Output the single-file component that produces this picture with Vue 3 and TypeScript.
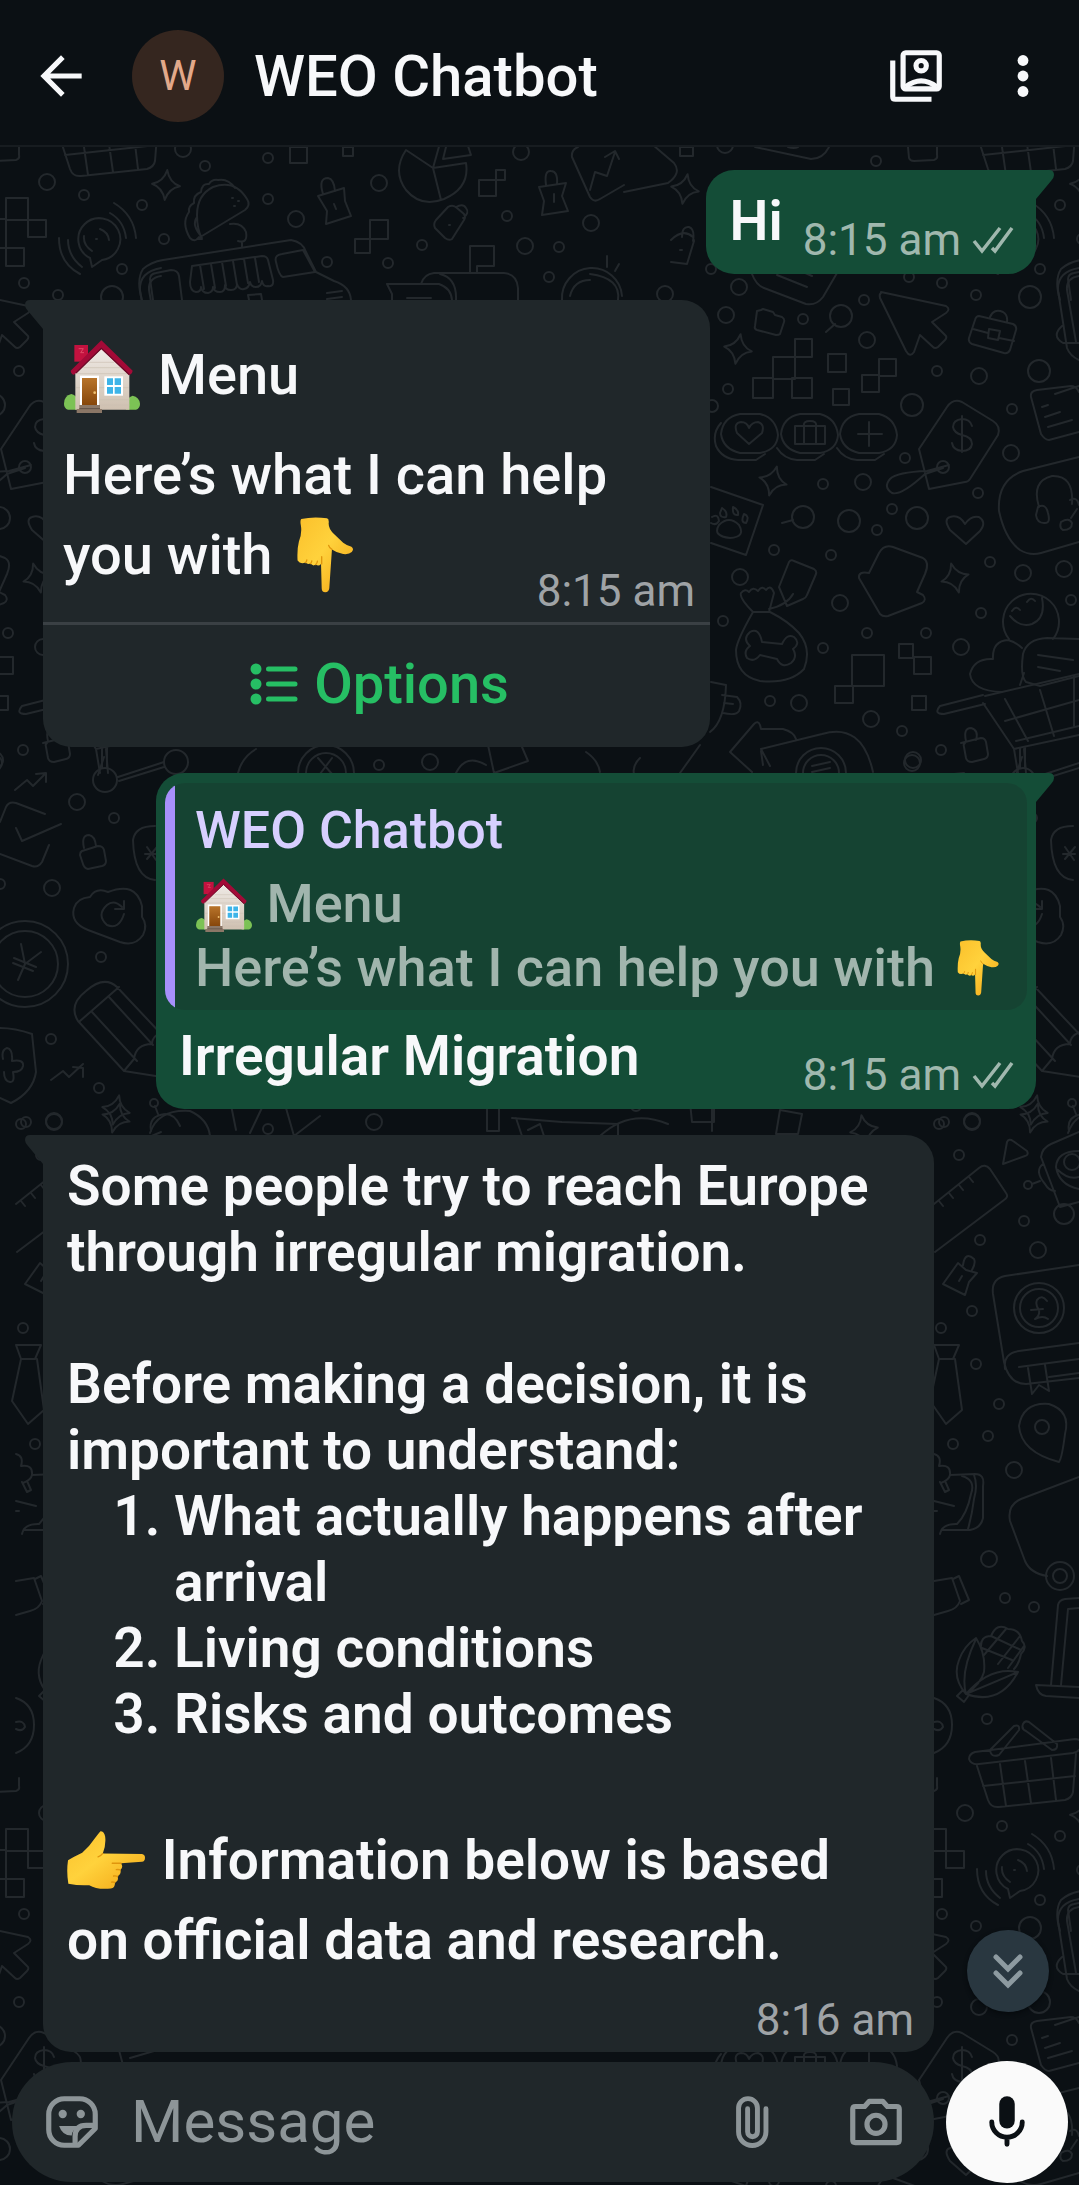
<script setup lang="ts">
import { ref } from 'vue'

type Ring = [x: number, y: number, r: number]
type Box = [x: number, y: number, w: number, h: number]

const draft = ref('')

const steps = ['What actually happens after arrival', 'Living conditions', 'Risks and outcomes']

// Wallpaper: one tile of line drawings, repeated every 918 x 1631.
const tileOffsets = [
  [0, 0],
  [-918, 0],
  [918, 0],
  [0, 1631],
  [918, 1631],
  [-918, -1631],
  [0, -1631],
  [-918, 1631],
]

const rings: Ring[] = [
  [47, 182, 8], [84, 195, 5], [205, 166, 5], [183, 149, 8], [142, 205, 5], [164, 239, 5],
  [122, 269, 5], [24, 283, 5], [58, 295, 5], [112, 297, 11], [268, 158, 5], [268, 199, 5],
  [296, 219, 8], [327, 262, 5], [379, 183, 8], [388, 263, 5], [422, 245, 5], [507, 216, 5],
  [521, 152, 8], [525, 246, 8], [549, 277, 5], [559, 247, 5], [591, 223, 8], [665, 294, 8],
  [876, 161, 5], [725, 145, 8], [711, 269, 5], [739, 287, 8], [909, 277, 5], [726, 315, 8],
  [803, 319, 5], [841, 316, 11], [864, 300, 5], [867, 340, 8], [728, 389, 5], [712, 406, 6],
  [937, 371, 5], [979, 376, 8], [1039, 371, 11], [912, 405, 11], [1012, 409, 5], [1011, 453, 8],
  [905, 458, 5], [978, 493, 5], [823, 484, 5], [863, 482, 8], [892, 509, 5], [803, 517, 11],
  [849, 521, 11], [877, 530, 5], [917, 518, 11], [774, 550, 5], [831, 555, 5], [740, 577, 8],
  [990, 562, 5], [1023, 573, 8], [1064, 569, 8], [840, 603, 8], [723, 621, 5], [981, 613, 5],
  [1071, 600, 5], [867, 633, 5], [926, 633, 5], [823, 648, 5], [961, 647, 8], [770, 701, 5],
  [799, 703, 8], [871, 719, 8], [902, 731, 5], [941, 750, 5], [913, 760, 8],
  [77, 802, 8], [114, 818, 5], [52, 888, 8], [0, 884, 5], [101, 957, 5], [51, 1039, 5],
  [99, 1088, 5], [21, 1124, 5], [54, 1121, 8], [959, 1155, 5], [980, 1240, 5], [1038, 1250, 8],
  [1024, 1221, 5], [972, 1311, 5], [941, 1328, 5], [976, 1364, 5], [999, 1404, 5], [988, 1436, 5],
  [953, 1444, 5], [1014, 1470, 8], [989, 1559, 8], [1005, 1598, 5], [1034, 1607, 5], [987, 1719, 5],
  [379, 765, 5], [430, 762, 8], [912, 763, 8], [374, 1122, 8], [268, 1129, 5], [636, 1106, 5],
  [944, 1122, 5], [972, 1122, 8],
]

const boxes: Box[] = [
  [290, 147, 17, 16], [343, 147, 10, 9], [479, 180, 17, 16], [496, 170, 9, 10], [370, 220, 18, 19],
  [355, 239, 15, 14], [6, 198, 22, 22], [28, 220, 18, 17], [-18, 219, 24, 29], [6, 248, 18, 18],
  [680, 147, 13, 9], [795, 339, 17, 18], [773, 357, 22, 22], [753, 378, 20, 20], [792, 378, 20, 20],
  [828, 354, 18, 18], [833, 389, 16, 16], [879, 359, 17, 17], [862, 375, 17, 17], [852, 655, 32, 31],
  [835, 686, 18, 17], [899, 644, 14, 14], [914, 657, 17, 17], [912, 696, 14, 14],
]

const sparkles: [number, number, number][] = [
  [166, 185, 5], [685, 189, 10], [738, 349, 10], [773, 481, 15], [955, 578, -15], [116, 1118, 15],
  [864, 1130, -10], [1034, 1110, 12],
]

const outlines: string[] = [
  // basket
  'M975 1752l100-13q8 0 6 8q-2 5-8 6l-94 11q-8 1-10-5q0-5 6-7zM977 1766l11 34q3 8 11 7l66-7q7-2 8-8l3-38M983 1786l92-10M1000 1764l6 42M1025 1761l6 42M1051 1758l5 42M990 1750l24-24q6-2 5 4l-20 25q-8 3-9-5M1023 1724q-2 5 3 7l26 19q6 0 5-6l-28-22q-4-2-6 2',
  // chat signal
  'M90 258a21 21 0 1 1 12 2l-10 7zM96 239h1M84 236q-1 9 8 15M100 229q8 3 9 11M68 240q0 16 14 27M59 238q0 25 21 36M110 213q14 8 16 25M114 203q20 12 22 35',
  // taco
  'M197 239l48-29q6-5 2-11q-12-20-34-12q-16 8-16 28q0 14 5 24zM199 237q-4 6-9 1q-9-15-1-26q-1-6 5-9q-1-8 7-11q1-9 8-8q3-5 9-4q10-2 17 8M232 198h1M238 201h1M234 206h1M197 217q-6 8 5 20M230 224q12-2 16 8q2 12-8 9M242 242v5',
  // push pins
  'M318 196l26-8l1 13l6 15l-25 8l1-13zM323 194q-5-16 5-16q6 1 7 13M334 204l2 5',
  'M539 187l27-4l-4 13l6 15l-26 4l2-14zM546 185q-2-15 5-14q7 0 6 13M554 194v8',
  // pie chart
  'M406 150q-14 21 0 40q15 18 38 9q26-11 22-36l-33 5l-27-18M433 168l8 32M433 168l7-25M447 143l-4 16l28-4l-3-9',
  // key tag
  'M436 220l12-13q5-3 9 1l7 6q2 3 0 6l-12 19q-3 2-7-1l-10-10q-2-4 1-8zM456 207q7-4 10 1q4 5-3 10M449 225h1',
  // growth chart card
  'M572 157l18 40q4 6 10 2l24-14M572 157q-1-7 6-10M590 190l5-18l12 4l8-24M605 157l10-6l4 8M646 139l28 24q8 10-6 20l-44 9',
  // food truck
  'M142 300q-6-20 1-31q8-7 20-9l128-20q12 2 15 12l10 20l18 9q16 5 17 19M153 300l-3-21q0-5 6-6l15-3q7 0 8 6l3 24M192 266l70-10q5 0 6 4l5 20q1 7-5 6q-5 1-6-5q-1 6-6 6q-5 0-6-5q-1 6-6 7t-7-5q0 6-6 6t-6-5q0 7-5 7q-6 0-7-5q0 5-5 6q-6 0-7-6q0 5-5 5q-6-1-6-10zM200 265l4 24M211 264l4 24M222 262l4 24M233 261l4 24M244 259l4 24M255 258l4 24M276 262q-2-7 6-8l21-4M303 250l12 22l-32 5q-4-1-7-15M249 300l-1-5l13-1l1 6M327 293l15-2M327 299l15-2',
  // mail box
  'M470 273v-27h24v20h-17v7M421 284q3-10 13-11h70q13 1 14 15v12M440 274q17 4 16 26M387 284h52q12 4 13 16M387 284l5 10v6M407 298h24',
  // bulb
  'M562 300a30 30 0 0 1 60-4M570 296q4-16 20-16M607 256v11M619 264l-4 7M590 274q31 4 28 26',
  // papers and lock
  'M755 147l56 12q12 0 18-12M788 147q6 2 10 0M908 147l1 11q1 3 5 3l20-1q4-1 3-5v-8',
  'M671 240q12-12 22-3l1 4l-7 23l-16-2M682 237q0-11 7-10q6 2 4 14M680 250h2M752 274q4 11 12 14l42 16q10 2 17-7l14-24M777 275l30 12M803 272l9 4',
  // folder
  'M757 311l4-1l2-1l10 3l2 3l7 2q3 2 2 5l-4 12q-1 1-4 1l-19-5q-3-1-2-4z',
  'M835 324l-9 8M793 520l-11 3',
  // cursor
  'M881 292l65 14q5 3 0 7l-14 9l14 14q1 2-1 4l-7 7q-3 2-5 0l-13-12l-6 17q-4 6-8-1l-26-53q-1-4 1-5z',
  // brief case
  'M979 316l34 8q4 2 3 6l-6 20q-2 4-6 3l-32-9q-4-2-3-6l6-18q1-4 4-4zM990 317q4-9 13-5q5 3 4 10M973 329l15 4M999 338l15 3M989 329l11 2l-2 9l-10-2z',
  // phone edge
  'M1079 268q-22 4-21 22l9 58q3 8 12 12M1079 276q-13 2-12 14l9 52M1062 326q-11 10 1 17h16',
  // coins
  'M740 414h20q16 4 18 21q-1 15-18 18h-20q-17-4-19-19q2-17 19-20M721 423q-9 10-5 23q6 13 22 14h18l9-6M800 414h20q16 4 18 21q-1 15-18 18h-20q-17-4-19-19q2-17 19-20M777 448q7 11 20 12h18l9-6M859 414h20q16 4 18 21q-1 15-18 18h-20q-17-4-19-19q2-17 19-20M837 448q7 11 20 12h18l9-6M749 444l-12-11q-4-10 4-11q6 0 8 6q3-6 9-6q7 2 4 11zM795 426h30v18h-30zM804 426v18M816 426v18M804 426q-1-5 6-5t6 5M869 422v24M858 434h24',
  // price tag
  'M919 449l28-42q6-9 15-5l31 19q8 5 5 14l-28 44q-2 3-5 3l-36 7zM962 416v36M972 426q-2-7-10-7q-9 1-9 8q1 6 9 8q10 2 10 9q-1 7-10 7q-9-1-10-8M949 465l-22 6q-30 1-37 8q-7 8 2 14q9 3 33-19l18-6M937 467a6 6 0 1 0 12 0a6 6 0 1 0-12 0',
  // document edge
  'M1079 386l-24 8M1042 407l6-2M1045 417l15-5M1048 427l24-7M1031 397q-1-6 6-7l34-4q5 0 8 6M1031 397l10 37q4 6 8 6l30-8',
  // head set card
  'M1079 457l-56 14q-26 9-24 40q6 28 21 39q10 6 21 3l38-11M1039 507q-8-26 13-31q22-1 20 28M1038 507q8-4 10 6q3 11-4 10q-7 0-8-8zM1070 500q7-4 9 5M1061 522q8-5 11 1q0 7-9 7q-4-2-2-8M1071 518l6-9',
  // paw photo
  'M711 487l52 18l-17 50l-35-12M719 525q10-10 20 0q7 12-9 13q-18-2-11-13M722 508q6 4 4 9q-6 1-6-4zM733 507q6 3 5 8q-6 1-5-8M744 514q6 2 2 9q-6 0-2-9M712 517q6-4 7 4q-3 5-8 2',
  // glove
  'M869 573l10-20q5-9 14-6l30 11q7 4 2 16l-8 18l6 3q4 5-1 8l-34 13q-5 1-8-2l-21-36q-1-7 10-5z',
  // heart
  'M966 544l-16-14q-7-11 0-13q9-3 15 7q6-9 14-7q8 5 1 14z',
  // treat bag, tag and bone
  'M753 612q-14-14-12-19q4-5 8-1q4-6 9-1q4-6 8-1q5-6 8 3l-5 19zM753 612q-16 28-17 38q0 26 24 31q30 3 44-12q8-20-5-36q-11-12-29-21M779 587l10-25q2-3 5-1l20 8q3 2 2 5l-9 21q-1 3-4 4l-16 7zM769 609q18-4 24-15M762 642l20 2q5-11 12-7q7 6-1 12q5 8-2 14q-9 6-14-4l-17-4q-6 8-13 3q-4-7 3-12q-8-7 0-14q9-5 12 10z',
  // happy face, heart and speech
  'M1009 639a28 28 0 1 1 44 0M1010 616q10 12 22 8q14-6 10-26M1012 611q4-6 8-1M1027 602q4-6 8-1M1002 692q-30-1-32-18q4-16 23-15q-1-18 15-19q8 2 14 8M1079 639l-32-1q-20 1-24 16q-3 22 3 28l14 4l39-10M1020 685l4-12M1038 655l35 5M1038 667l22 4',
  // cart
  'M983 695l-43 11q-7 8 4 8l41-10M983 703l31 46l65-14M1005 699l23 42M1040 690l14 46M1074 676v50M1005 721l74-21M985 696l94-22M1014 749l4 24M1024 749l2 24M1016 741l63-15',
  // padlock
  'M961 743l20-5q4 0 5 4l2 12q0 4-4 5l-12 3q-5 0-6-4l-2-11q-1-3 1-4M966 741q-3-13 5-13q8 2 5 12',
  // arrow and money letter
  'M752 772l-22-20l24-28q4-4 6 1l1 4h22q11 3 13 10M761 751l2 14M761 749l61-15q40-12 51 38M761 749l9 17M796 773a25 25 0 0 1 50 0M803 773a18 18 0 0 1 36 0M812 766l18-4M812 772l18-4',
  // cup
  'M711 682l15 3q-1 36-16 47M722 695l15 2q6 6 2 14q-3 5-16 2M724 703l9 1',
  // trend arrows
  'M15 790l12-10l6 6l12-12M36 774l10-1v9M51 1080l12-9l6 6l14-13M73 1067l10 1v9',
  // ticked card
  'M45 814l-29-11q-7-2-10 4l-6 15M16 828l6 13l39-17M49 845l-7 17q-4 6-10 4l-32-12',
  // small lock, code tile
  'M82 851l16-5q5 0 6 4l2 11q0 4-4 5l-14 3q-4-1-5-5l-3-9q0-3 2-4M84 848q-3-13 5-13q6 1 7 11M155 826q-20 0-22 14q1 38 22 40M147 847l9 13M157 847l-10 12M145 854h12',
  // cloud
  'M88 930q-18-7-14-22q3-10 16-11q6-10 18-5q28-11 34 14v11q6 8 1 18q-8 12-23 7zM124 914q-5 16-17 11q-11-10 0-20q7-6 15 2M115 909h9v-8',
  // yen coin
  'M-18 964a43 43 0 1 0 86 0a43 43 0 1 0-86 0M-8 964a33 33 0 1 0 66 0a33 33 0 1 0-66 0M21 944l4 20l16-12M25 964l-7 16M14 958l22 9M13 963l20 8',
  // pencil
  'M78 1021q-10-16 8-30q18-16 31-4l47 50M78 1021l46 50l38 6M92 1012l45 49M109 997l44 48M80 1021l39-34M124 1071l10-12q2-15 18-15q0-8 10-12',
  // shield
  'M0 1028q15 0 32 6l4 38q-3 20-25 31l-11-5M3 1059q-2-9 4-11q6 1 5 13q12-2 11 5q-1 6-10 6q2 11-3 10q-6-1-6-10',
  // robot
  'M151 1131q-3-15 14-17q10 0 15 12M158 1114l-3-8M150 1103a4 4 0 1 0 8 0a4 4 0 1 0-8 0',
  // molecule
  'M93 780a12 12 0 1 0 24 0a12 12 0 1 0-24 0M102 768v-20M107 768v-20M118 777l46-15M119 781l45-14M164 762a12 12 0 1 0 24 0a12 12 0 1 0-24 0',
  // play triangle, ruler, pin
  'M1003 1164l4-22q2-4 6-1l14 10q2 4-2 5zM934 1204l45-36q6-5 11 1l16 24q3 4-2 7l-69 52M939 1201l4 5M949 1193l4 5M959 1185l4 5M969 1177l4 5M943 1284l15-21l8 7l11 3l-8 9l-4 13zM963 1265q2-14 11-6q2 4-2 11M959 1281l3-5',
  // rover
  'M1079 1132l-28 12q-9 4-10 13l19 50l19-5M1043 1164q-9 7 2 20q4 7 10 7M1032 1184l8-3M1024 1185a4 4 0 1 0 8 0a4 4 0 1 0-8 0M1054 1214a10 10 0 1 0 20 0a10 10 0 1 0-20 0M1079 1151q-22 0-23 16q3 18 23 22M1064 1162a8 8 0 1 0 16 0a8 8 0 1 0-16 0M1058 1170q10 10 21 7',
  // account book
  'M1079 1265l-74 11q-14 3-12 18l11 68q5 22 22 22l53-6M1079 1343l-60 8q-16 2-14 18M1079 1359l-60 8M1079 1373l-30 4M1028 1368l4 26l7-9l10 6l-4-26M1014 1308a25 25 0 1 0 50 0a25 25 0 1 0-50 0M1020 1308a19 19 0 1 0 38 0a19 19 0 1 0-38 0M1047 1301q-5-7-10-1q-2 5 2 10q1 6-4 9q8-4 13 0M1031 1310l12-1',
  // tie
  'M934 1345h25l-6 14h-14zM939 1359l-9 42l16 23l16-14l-7-51',
  // map pin
  'M1059 1462q-38-10-40-36q4-24 30-22q22 7 16 30q-3 24-6 28M1035 1427a7 7 0 1 0 14 0a7 7 0 1 0-14 0',
  // rucksack
  'M934 1454q8 2 5 12q12-2 11 9q-1 5-9 8M950 1475l25-1q10 0 8 12v32q-2 10-13 12h-28M962 1476q14 4 9 18q-4 20-14 30M940 1482l5 10l4-2l-4-9M934 1501l20 5M934 1511h3M974 1475q4 10 0 24q-2 16-6 30M940 1534q2-10 16-10',
  // van
  'M1079 1477l-58 22q-14 6-11 22l15 40q5 12 22 15M1046 1576a14 14 0 1 0 28 0a14 14 0 1 0-28 0M1053 1576a7 7 0 1 0 14 0a7 7 0 1 0-14 0',
  // bottle
  'M934 1581l18-3l8 23q-3 8-12 10l-14 4M953 1579l6-3l10 24l-8 4',
  // corn
  'M966 1694q-14-16-7-34q5-14 17-22q10 16 8 34q-3 12-18 22zM966 1694q-6-22 10-55M966 1694q34 12 52-22q-28-6-52 22M966 1694q34-14 52-22M957 1696l6-6l6 5l-5 7zM981 1648q-1-12 10-12q6-14 17-7q12 0 14 12q6 6-1 13q-2 10-7 15M982 1648l30 12M991 1636l30 14M1006 1629l-22 26M1020 1636l-22 28M1024 1646l-16 22',
  // laptop
  'M1079 1598l-14 1q-6 1-7 6l-7 80M1079 1608l-11 1l-7 76M1079 1687l-43-2q2 10 10 11l33 2',
  // bean
  'M934 1698q18 6 18 27t-18 28M934 1722q8-2 9 5q-3 5-9 2',
  // small objects between the cards
  'M250 1133l18-38M230 1100l6 30M487 1109v22h12v-22M512 1118l50 4l56 2v12M516 1118l6 18M528 1130l12-6l4 12M690 1102l2 20h22v-22M712 1109v22M600 1136q30-28 68-12M780 1110l22 4l-4 20h-22zM150 1133q8-24 40-22q18 8 20 25M286 1108l8 28l26-20',
  'M298 773a28 28 0 0 1 56 0M306 773a20 20 0 0 1 40 0M318 758l14 16M332 758l-12 16M456 773q10-20 30-8M488 745l6 28l34-12l-6-14M586 752q12 8 14 20M1022 757l-6 18M700 745l-20 28M640 758q-8 8-6 16M238 773q4-16 18-24',
]
</script>

<template>
  <div class="app">
    <header class="bar">
      <button class="icon-button" type="button" aria-label="Back">
        <svg class="icon" viewBox="0 0 24 24" fill="currentColor">
          <path d="M20 11H7.83l5.59-5.59L12 4l-8 8 8 8 1.41-1.41L7.83 13H20z" />
        </svg>
      </button>
      <div class="avatar" aria-hidden="true">W</div>
      <h1 class="title">WEO Chatbot</h1>
      <button class="icon-button" type="button" aria-label="Media">
        <svg class="icon" viewBox="0 0 24 24" fill="none" stroke="currentColor" stroke-width="2">
          <path d="M3 6v14q0 1 1 1h14" />
          <rect x="7" y="3" width="14" height="14" rx="1" />
          <circle cx="14" cy="8" r="2" />
          <path d="M8 16.2q6-4.600 12 0" />
        </svg>
      </button>
      <button class="icon-button" type="button" aria-label="More options">
        <svg class="icon" viewBox="0 0 24 24" fill="currentColor">
          <circle cx="12" cy="6" r="2.100" />
          <circle cx="12" cy="12" r="2.100" />
          <circle cx="12" cy="18" r="2.100" />
        </svg>
      </button>
    </header>

    <div class="room">
      <svg class="wallpaper" aria-hidden="true">
        <defs>
          <g id="doodle-tile">
            <circle v-for="(c, i) in rings" :key="'c' + i" :cx="c[0]" :cy="c[1]" :r="c[2]" />
            <rect v-for="(b, i) in boxes" :key="'b' + i" :x="b[0]" :y="b[1]" :width="b[2]" :height="b[3]" />
            <path
              v-for="(s, i) in sparkles"
              :key="'s' + i"
              d="M0-15Q3-3 14 0Q3 3 0 15Q-3 3-14 0Q-3-3 0-15z"
              :transform="`translate(${s[0]} ${s[1]}) rotate(${s[2]})`"
            />
            <path v-for="(d, i) in outlines" :key="'o' + i" :d="d" />
          </g>
        </defs>
        <g transform="translate(0 -147)">
          <use v-for="(o, i) in tileOffsets" :key="i" href="#doodle-tile" :x="o[0]" :y="o[1]" />
        </g>
      </svg>

      <svg class="sprites" aria-hidden="true">
        <defs>
          <linearGradient id="skin" x1="0" y1="0" x2="1" y2="1">
            <stop offset="0" stop-color="#fbc02b" />
            <stop offset="0.45" stop-color="#ffd23c" />
            <stop offset="1" stop-color="#f2a313" />
          </linearGradient>
          <linearGradient id="door" x1="0" y1="0" x2="0" y2="1">
            <stop offset="0" stop-color="#b8742a" />
            <stop offset="1" stop-color="#85450a" />
          </linearGradient>
          <linearGradient id="wall" x1="0" y1="0" x2="0" y2="1">
            <stop offset="0" stop-color="#f0ece8" />
            <stop offset="1" stop-color="#cfc0b0" />
          </linearGradient>
        </defs>
        <symbol id="house" viewBox="0 -10 228 228">
          <path d="M31 14h41v50H31z" fill="#c2123f" />
          <path d="M44 25h14l-8 12h10" fill="none" stroke="#e04a66" stroke-width="3" />
          <path d="M0 190q0-24 22-29q14 2 20 20v27H12q-12-4-12-18z" fill="#7cc255" />
          <path d="M228 190q-2-20-22-24q-14 4-20 20v22h30q12-4 12-18z" fill="#7cc255" />
          <path d="M34 92L112 16l84 78v114H34z" fill="url(#wall)" />
          <path d="M76 66h74M58 82h110M36 100h158M36 142h158M102 178h94M102 194h94" stroke="#cbbfb2" stroke-width="2" />
          <path d="M112 0l94 91q-2 12-12 12l-82-77-82 77q-9-1-10-12z" fill="#a30a37" />
          <path d="M36 98l76-74 84 79" fill="none" stroke="#6b0a28" stroke-width="4" />
          <path d="M48 106h57v90H48z" fill="#fff" />
          <path d="M54 113h45v83H54z" fill="url(#door)" />
          <circle cx="92" cy="157" r="4" fill="#f0c070" />
          <path d="M46 194h62v12h6v12H38v-12h8z" fill="#8b7767" />
          <path d="M46 205h62" stroke="#5f5047" stroke-width="3" />
          <path d="M121 108h56v58h-56z" fill="#fff" />
          <path d="M129 114h18v20h-18zM152 114h19v20h-19zM129 140h18v20h-18zM152 140h19v20h-19z" fill="#3eb4e8" />
        </symbol>
        <symbol id="point-down" viewBox="0 0 170 230">
          <path
            d="M13 6Q50-2 91 4Q98 6 96 20Q96 38 113 52L140 78Q150 86 165 90Q174 97 166 106Q158 114 140 112Q120 108 106 98L98 216Q96 228 86 228Q75 228 75 216L73 142Q66 151 57 144Q49 150 41 141Q32 145 26 138Q10 144 2 132Q0 98 6 74Q16 50 12 26Q9 12 13 6z"
            fill="url(#skin)"
          />
          <path d="M26 138q3-2 4-8M41 141q3-2 4-8M57 144q4-3 5-10M75 142v-22M106 98q-8-4-10-12" fill="none" stroke="#e0950d" stroke-width="4" stroke-linecap="round" />
        </symbol>
        <symbol id="point-right" viewBox="0 0 231 171">
          <path
            d="M99 0Q110 0 113 16Q116 42 106 66L222 68Q231 70 231 79Q231 90 222 91L160 95Q168 107 158 115Q162 127 150 134Q154 148 142 152Q143 169 130 170Q88 174 66 160Q36 162 4 156Q-2 120 3 86Q20 76 45 64Q68 44 82 22Q92 8 99 0z"
            fill="url(#skin)"
          />
          <path d="M160 95h-26M158 115q-6-2-12-1M150 134q-6-2-12-1M142 152q-5-2-10-1M106 66q-6 8-14 10" fill="none" stroke="#e0950d" stroke-width="4" stroke-linecap="round" />
        </symbol>
        <symbol id="ticks" viewBox="0 0 42 28">
          <path d="M2 15l8 10L28 2M20 22l3 3L40 2" fill="none" stroke="currentColor" stroke-width="3.500" />
        </symbol>
        <symbol id="tail" viewBox="0 0 20 30">
          <path d="M0 0h15q5 0 5 5q0 3-3 6L2 29H0z" fill="currentColor" />
        </symbol>
      </svg>

      <main class="thread">
        <article class="bubble sent short">
          <svg class="tail"><use href="#tail" /></svg>
          <div class="line">
            <p class="text">Hi</p>
            <p class="meta"><time>8:15 am</time><svg class="ticks" role="img" aria-label="Delivered"><use href="#ticks" /></svg></p>
          </div>
        </article>

        <article class="bubble received menu">
          <svg class="tail"><use href="#tail" /></svg>
          <div class="menu-body">
            <p class="text tall"><svg class="emoji" role="img" aria-label="House"><use href="#house" /></svg> Menu</p>
            <p class="text tall">Here’s what I can help you with <svg class="emoji" role="img" aria-label="Pointing down"><use href="#point-down" /></svg></p>
            <p class="meta"><time>8:15 am</time></p>
          </div>
          <button class="options" type="button">
            <svg class="list-icon" viewBox="0 0 48 42" fill="currentColor" aria-hidden="true">
              <circle cx="6" cy="6" r="5.500" /><circle cx="6" cy="21" r="5.500" /><circle cx="6" cy="36" r="5.500" />
              <path d="M18.500 6H45M18.500 21H45M18.500 36H45" stroke="currentColor" stroke-width="5" stroke-linecap="round" />
            </svg>
            Options
          </button>
        </article>

        <article class="bubble sent reply">
          <svg class="tail"><use href="#tail" /></svg>
          <blockquote class="quote">
            <p class="author">WEO Chatbot</p>
            <p><svg class="emoji" role="img" aria-label="House"><use href="#house" /></svg> Menu</p>
            <p>Here’s what I can help you with <svg class="emoji" role="img" aria-label="Pointing down"><use href="#point-down" /></svg></p>
          </blockquote>
          <div class="line">
            <p class="text">Irregular Migration</p>
            <p class="meta"><time>8:15 am</time><svg class="ticks" role="img" aria-label="Delivered"><use href="#ticks" /></svg></p>
          </div>
        </article>

        <article class="bubble received answer">
          <svg class="tail"><use href="#tail" /></svg>
          <p class="text">Some people try to reach Europe through irregular migration.</p>
          <p class="text spaced">Before making a decision, it is important to understand:</p>
          <ol class="text steps">
            <li v-for="step in steps" :key="step">{{ step }}</li>
          </ol>
          <p class="text tall source"><svg class="emoji" role="img" aria-label="Pointing right"><use href="#point-right" /></svg> Information below is based on official data and research.</p>
          <p class="meta"><time>8:16 am</time></p>
        </article>
      </main>

      <form class="composer" @submit.prevent>
        <button class="jump" type="button" aria-label="Scroll to latest">
          <svg viewBox="0 0 32 36" fill="none" stroke="currentColor" stroke-width="5" stroke-linecap="round">
            <path d="M4 4l12 12L28 4M4 20l12 12 12-12" />
          </svg>
        </button>
        <div class="field">
          <button class="icon-button" type="button" aria-label="Stickers">
            <svg class="icon" viewBox="0 0 24 24" fill="none" stroke="currentColor" stroke-width="2" stroke-linejoin="round">
              <path d="M9 3h6a6 6 0 0 1 6 6v5.500L14.500 21H9a6 6 0 0 1-6-6V9a6 6 0 0 1 6-6z" />
              <path d="M21 13.300h-3.500q-4.300 0-4.300 4.300V21" />
              <path d="M7 13.500h7.800q-2.800 1.400-2.900 3.700Q8.300 17.300 7 13.500z" fill="currentColor" stroke="none" />
              <circle cx="8.400" cy="8.900" r="1.600" fill="currentColor" stroke="none" />
              <circle cx="15.400" cy="8.900" r="1.600" fill="currentColor" stroke="none" />
            </svg>
          </button>
          <input v-model="draft" class="message" type="text" placeholder="Message" aria-label="Message" />
          <button class="icon-button" type="button" aria-label="Attach">
            <svg class="icon" viewBox="0 0 24 24" fill="none" stroke="currentColor" stroke-width="1.900" stroke-linecap="round">
              <path d="M17.400 6.900v8.900a5.300 5.300 0 0 1-10.600 0V6.600a3.650 3.650 0 0 1 7.300 0v9.200a1.900 1.900 0 0 1-3.800 0V6.900" />
            </svg>
          </button>
          <button class="icon-button" type="button" aria-label="Camera">
            <svg class="icon" viewBox="0 0 24 24" fill="none" stroke="currentColor" stroke-width="2" stroke-linejoin="round">
              <path d="M4 6h3.600l1.800-2h5.200l1.800 2H20q1 0 1 1v12q0 1-1 1H4q-1 0-1-1V7q0-1 1-1z" />
              <circle cx="12" cy="12.900" r="3.500" />
            </svg>
          </button>
        </div>
        <button class="mic" type="button" aria-label="Voice message">
          <svg class="icon" viewBox="0 0 24 24" fill="none" stroke="currentColor" stroke-width="1.900" stroke-linecap="round">
            <rect x="9" y="2" width="6" height="12.500" rx="3" fill="currentColor" stroke="none" />
            <path d="M6.100 12a5.900 5.900 0 0 0 11.800 0M12 18v2.600" />
          </svg>
        </button>
      </form>
    </div>
  </div>
</template>

<style>
body {
  background: #0b1014;
}
</style>

<style scoped>
.app {
  display: flex;
  flex-direction: column;
  min-height: 100vh;
  background: #0b1014;
  color: #f7f8fa;
  font-family: Roboto, "Noto Sans", sans-serif;
}

button {
  padding: 0;
  border: 0;
  background: none;
  color: inherit;
  font: inherit;
}

p,
h1,
ol,
blockquote {
  margin: 0;
}

svg {
  display: block;
}

.icon,
.icon-button {
  flex: none;
  width: 62px;
  height: 62px;
}

.bar {
  display: flex;
  align-items: center;
  height: 147px;
  padding: 6px 25px 0 30px;
  box-sizing: border-box;
  border-bottom: 2px solid #171c20;
}

.avatar {
  display: flex;
  align-items: center;
  justify-content: center;
  width: 92px;
  height: 92px;
  margin: 0 30px 0 40px;
  border-radius: 50%;
  background: #35261f;
  color: #e3a98a;
  font-size: 42px;
}

.title {
  flex: 1;
  font-size: 58px;
  line-height: 68px;
  font-weight: 500;
}

.bar .icon-button + .icon-button {
  margin-left: 45px;
}

.room {
  position: relative;
  display: flex;
  flex: 1;
  flex-direction: column;
  overflow: hidden;
}

.wallpaper {
  position: absolute;
  inset: 0;
  width: 100%;
  height: 100%;
  fill: none;
  stroke: #23282c;
  stroke-width: 2;
  stroke-linecap: round;
  stroke-linejoin: round;
}

.sprites {
  position: absolute;
  width: 0;
  height: 0;
}

.thread {
  position: relative;
  display: flex;
  flex: 1;
  flex-direction: column;
  align-items: flex-start;
  gap: 26px;
  padding: 23px 43px 9px;
}

.bubble {
  position: relative;
  box-sizing: border-box;
  max-width: 100%;
  border-radius: 28px;
}

.tail {
  position: absolute;
  top: 0;
  width: 20px;
  height: 30px;
}

.sent {
  align-self: flex-end;
  border-top-right-radius: 0;
  background: #144d37;
}

.sent .tail {
  right: -18px;
  color: #144d37;
}

.received {
  border-top-left-radius: 0;
  background: #20272a;
}

.received .tail {
  left: -18px;
  color: #20272a;
  transform: scaleX(-1);
}

.text {
  font-size: 55px;
  line-height: 66px;
  font-weight: 600;
}

.tall {
  line-height: 80px;
}

.emoji {
  display: inline-block;
  width: 78px;
  height: 76px;
  margin-right: 3px;
  vertical-align: -19px;
}

.meta {
  display: flex;
  align-items: center;
  justify-content: flex-end;
  gap: 11px;
  color: #9fa3a6;
  font-size: 44px;
  line-height: 52px;
  white-space: nowrap;
}

.sent .meta {
  color: #a0b8ae;
}

.ticks {
  width: 42px;
  height: 28px;
}

.line {
  display: flex;
  align-items: flex-end;
  justify-content: space-between;
  gap: 20px;
}

.line .text {
  margin-bottom: 12px;
}

.short {
  padding: 18px 22px 8px 23px;
}

.menu {
  width: 667px;
}

.menu-body {
  padding: 35px 15px 5px 20px;
}

.menu-body .text {
  font-size: 56px;
  font-weight: 500;
}

.menu-body .text + .text {
  margin-top: 20px;
}

.menu-body .meta {
  margin-top: -30px;
}

.options {
  display: flex;
  align-items: center;
  justify-content: center;
  gap: 16px;
  width: 100%;
  height: 125px;
  padding: 0 0 4px 6px;
  border-top: 3px solid #3a4044;
  color: #26bf64;
  font-size: 56px;
  font-weight: 500;
}

.list-icon {
  width: 48px;
  height: 42px;
}

.reply {
  width: 880px;
  padding: 10px 9px 8px;
}

.quote {
  padding: 16px 12px 10px 30px;
  border-radius: 20px;
  background: linear-gradient(to right, #a690fb 10px, #154332 10px);
  color: #a1b5ad;
  font-size: 54px;
  line-height: 64px;
  font-weight: 500;
}

.author {
  margin-bottom: 9px;
  color: #d7cfff;
  font-size: 52px;
}

.quote .emoji {
  width: 58px;
  height: 56px;
  margin-right: 0;
  vertical-align: -10px;
}

.reply .line {
  padding: 13px 13px 0 14px;
}

.answer {
  width: 891px;
  padding: 18px 20px 6px 24px;
}

.spaced {
  margin-top: 66px;
}

.steps {
  padding-left: 107px;
}

.source {
  margin-top: 73px;
  padding-right: 14px;
}

.answer .meta {
  margin-top: 14px;
}

.composer {
  position: relative;
  display: flex;
  align-items: center;
  gap: 12px;
  padding: 0 11px 2px 12px;
}

.field {
  display: flex;
  flex: 1;
  align-items: center;
  min-width: 0;
  height: 120px;
  padding: 0 27px 0 29px;
  box-sizing: border-box;
  border-radius: 60px;
  background: #20272a;
  color: #8d9598;
}

.field .icon-button + .icon-button {
  margin-left: 62px;
}

.message {
  flex: 1;
  min-width: 0;
  height: 72px;
  margin-left: 28px;
  padding: 0;
  border: 0;
  outline: 0;
  background: none;
  color: #f7f8fa;
  font: 400 60px/72px Roboto, "Noto Sans", sans-serif;
}

.message::placeholder {
  color: #8d9598;
  opacity: 1;
}

.mic {
  display: flex;
  flex: none;
  align-items: center;
  justify-content: center;
  width: 122px;
  height: 122px;
  border-radius: 50%;
  background: #fafafa;
  color: #0b1014;
}

.jump {
  position: absolute;
  right: 30px;
  bottom: 173px;
  display: flex;
  align-items: center;
  justify-content: center;
  width: 82px;
  height: 82px;
  border-radius: 50%;
  background: #293740;
  color: #8d9aa0;
  box-shadow: 0 2px 4px #060a0d;
}

.jump svg {
  width: 32px;
  height: 36px;
}
</style>
